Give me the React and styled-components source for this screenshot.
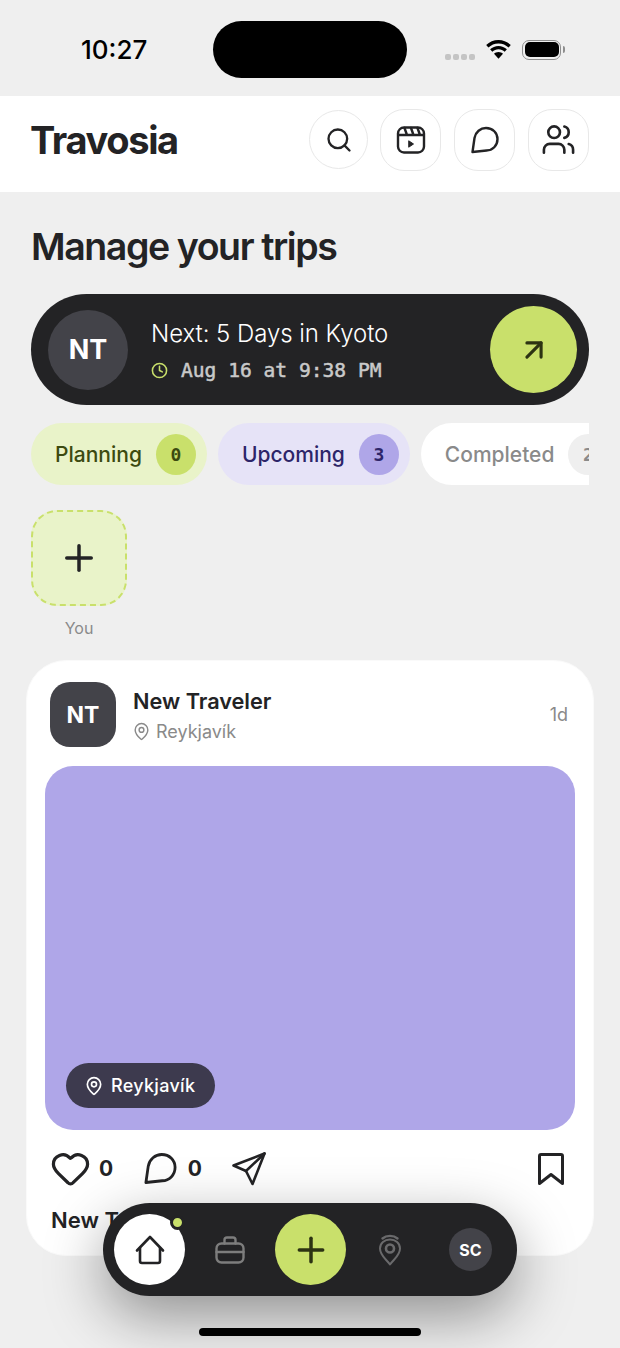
import styled, { createGlobalStyle } from "styled-components";
import { ArrowUpRight, Clock, MapPin, Plus, Search, Users, Heart } from "lucide-react";

const GlobalStyle = createGlobalStyle`
  html, body {
    margin: 0;
    padding: 0;
    background: #efefef;
  }
  body {
    font-family: Inter, "Noto Sans", sans-serif;
    color: #232325;
    overflow: hidden;
  }
  * {
    box-sizing: border-box;
  }
`;

const ChatIcon = ({ size = 30 }) => (
  <svg width={size} height={size} viewBox="0 0 30 30" fill="none" stroke="currentColor" strokeWidth="2.4" strokeLinejoin="round">
    <path d="M2.5 27 L4.5 13 C5.5 7 10.5 3 16 3 C22.8 3 27.5 8 27.5 14 C27.5 20.8 22.5 25.3 16.5 25.5 Z" />
  </svg>
);

const ReelsIcon = () => (
  <svg width="30" height="30" viewBox="0 0 30 30" fill="none" stroke="currentColor" strokeWidth="2.4" strokeLinejoin="round" strokeLinecap="round">
    <rect x="2" y="2.5" width="26" height="25" rx="6" />
    <path d="M2.5 10h25M8.5 3l2.5 7M15 3l2.5 7M21.5 3l2.5 7" />
    <path d="M13 16l4.5 3-4.5 3z" fill="currentColor" strokeWidth="1" />
  </svg>
);

const PlaneIcon = () => (
  <svg width="36" height="36" viewBox="0 0 36 36" fill="none" stroke="currentColor" strokeWidth="2.6" strokeLinejoin="round" strokeLinecap="round">
    <path d="M33.5 2.5 L2.5 14.5 L15 20 L21.5 33 Z" />
    <path d="M33.5 2.5 L15 20" />
  </svg>
);

const BookmarkIcon = () => (
  <svg width="28" height="34" viewBox="0 0 28 34" fill="none" stroke="currentColor" strokeWidth="3" strokeLinejoin="round" strokeLinecap="round">
    <path d="M2.5 4 C2.5 3 3.1 2.4 4.1 2.4 H23.9 C24.9 2.4 25.5 3 25.5 4 V31.5 L14 22.5 L2.5 31.5 Z" />
  </svg>
);

const HouseIcon = () => (
  <svg width="30" height="30" viewBox="0 0 30 30" fill="none" stroke="currentColor" strokeWidth="2.6" strokeLinejoin="round" strokeLinecap="round">
    <path d="M2 15.5 L15 2 L28 15.5" />
    <path d="M5 13 V26 C5 27.2 5.8 28 7 28 H23 C24.2 28 25 27.2 25 26 V13" />
  </svg>
);

const CaseIcon = () => (
  <svg width="30" height="28" viewBox="0 0 30 28" fill="none" stroke="currentColor" strokeWidth="2.4" strokeLinejoin="round" strokeLinecap="round">
    <rect x="1.5" y="7.5" width="27" height="19" rx="5" />
    <path d="M9.5 7.5 V4 C9.5 2.6 10.4 1.5 12 1.5 H18 C19.6 1.5 20.5 2.6 20.5 4 V7.5" />
    <path d="M1.5 16 H28.5" />
  </svg>
);

const SignalPinIcon = () => (
  <svg width="24" height="32" viewBox="0 0 24 32" fill="none" stroke="currentColor" strokeLinecap="round" strokeLinejoin="round">
    <path d="M12 30.5 C8 25 2 21.5 2 14.5 C2 9 6.5 5.5 12 5.5 C17.5 5.5 22 9 22 14.5 C22 21.5 16 25 12 30.5 Z" strokeWidth="2" />
    <circle cx="12" cy="14.5" r="4" strokeWidth="2.6" />
    <path d="M4.5 4.5 C8.5 1 15.5 1 19.5 4.5" strokeWidth="2.4" />
  </svg>
);

const WifiIcon = () => (
  <svg width="27" height="20" viewBox="0 0 27 20" fill="currentColor">
    <path d="M13.5 3.4c3.9 0 7.5 1.6 10.1 4.1l2.2-2.4C22.6 2 18.3.1 13.5.1S4.4 2 1.2 5.1l2.2 2.4c2.6-2.5 6.2-4.1 10.1-4.1z" />
    <path d="M13.5 9.2c2.4 0 4.6.9 6.2 2.5l2.2-2.4c-2.2-2.1-5.2-3.4-8.4-3.4s-6.2 1.3-8.4 3.4l2.2 2.4c1.6-1.6 3.8-2.5 6.2-2.5z" />
    <path d="M13.5 11.9c-1.8 0-3.4.7-4.5 1.8l4.5 5.1 4.5-5.1c-1.1-1.1-2.7-1.8-4.5-1.8z" />
  </svg>
);

const Page = styled.div`
  width: 620px;
  height: 1348px;
  position: relative;
  overflow: hidden;
  background: #efefef;
`;

const StatusBar = styled.div`
  height: 96px;
  padding: 21px 53px 0 81px;
  display: flex;
  align-items: flex-start;
`;

const Time = styled.div`
  width: 132px;
  height: 57px;
  display: flex;
  align-items: center;
  font-size: 26px;
  font-weight: 500;
  color: #000;
`;

const Island = styled.div`
  width: 194px;
  height: 57px;
  border-radius: 29px;
  background: #000;
`;

const StatusIcons = styled.div`
  height: 57px;
  margin-left: 38px;
  display: flex;
  align-items: center;
  color: #000;
`;

const SignalDots = styled.div`
  display: flex;
  gap: 2px;
  margin: 14px 10px 0 0;
`;

const SignalDot = styled.span`
  width: 6px;
  height: 6px;
  border-radius: 2px;
  background: #c4c4c4;
`;

const Battery = styled.div`
  width: 39px;
  height: 20px;
  margin-left: 10px;
  border: 1.5px solid #8e8e8e;
  border-radius: 7px;
  padding: 1.5px;
  position: relative;
  &::before {
    content: "";
    display: block;
    height: 100%;
    border-radius: 5px;
    background: #000;
  }
  &::after {
    content: "";
    position: absolute;
    right: -5px;
    top: 5px;
    width: 2px;
    height: 7px;
    border-radius: 0 2px 2px 0;
    background: #8e8e8e;
  }
`;

const Header = styled.header`
  height: 96px;
  background: #fff;
  padding: 0 31px 9px;
  display: flex;
  align-items: center;
  justify-content: space-between;
`;

const Brand = styled.h1`
  margin: 0 0 0 -1px;
  font-size: 38px;
  font-weight: 650;
  letter-spacing: -1.35px;
  color: #232325;
`;

const HeaderActions = styled.div`
  display: flex;
  align-items: center;
  gap: 13px;
`;

const IconButton = styled.button`
  width: ${({ $narrow }) => ($narrow ? 59 : 61)}px;
  height: ${({ $narrow }) => ($narrow ? 59 : 62)}px;
  margin-right: ${({ $narrow }) => ($narrow ? -1 : 0)}px;
  padding: 0;
  border-radius: ${({ $narrow }) => ($narrow ? "50%" : "24px")};
  border: 1.5px solid #e8e8e8;
  background: #fff;
  color: #232325;
  display: flex;
  align-items: center;
  justify-content: center;
`;

const Main = styled.main`
  padding: 0 31px;
`;

const PageTitle = styled.h2`
  margin: 30px 0 22px;
  height: 50px;
  line-height: 50px;
  font-size: 37.5px;
  font-weight: 600;
  letter-spacing: -1.42px;
  color: #232325;
`;

const NextCard = styled.div`
  height: 111px;
  border-radius: 56px;
  background: #232325;
  padding: 0 12px 0 17px;
  display: flex;
  align-items: center;
`;

const NextAvatar = styled.div`
  width: 80px;
  height: 80px;
  border-radius: 50%;
  background: #434349;
  color: #fff;
  font-size: 27px;
  font-weight: 700;
  display: flex;
  align-items: center;
  justify-content: center;
  flex: none;
`;

const NextText = styled.div`
  flex: 1;
  margin-left: 23px;
  padding-top: 2px;
  display: flex;
  flex-direction: column;
  gap: 8px;
`;

const NextTitle = styled.div`
  font-size: 24px;
  font-weight: 300;
  letter-spacing: -0.05px;
  color: #fff;
  line-height: 32px;
`;

const NextWhen = styled.div`
  display: flex;
  align-items: center;
  gap: 13px;
  font-family: "DejaVu Sans Mono", monospace;
  font-size: 19.6px;
  line-height: 26px;
  color: #c9c9c9;
  -webkit-text-stroke: 0.5px #c9c9c9;
  svg {
    color: #c9e06b;
  }
`;

const GoButton = styled.button`
  width: 87px;
  height: 87px;
  padding: 0;
  border: none;
  border-radius: 50%;
  background: #c9e06b;
  color: #2c3312;
  display: flex;
  align-items: center;
  justify-content: center;
`;

const Tabs = styled.div`
  margin-top: 18px;
  display: flex;
  gap: 11px;
  overflow: hidden;
`;

const tabColors = {
  green: { bg: "#e9f3c9", fg: "#3c4a10", badge: "#c9e06b" },
  purple: { bg: "#e6e3f7", fg: "#2d2569", badge: "#afa6e8" },
  plain: { bg: "#fff", fg: "#8a8a8a", badge: "#efefef" },
};

const Tab = styled.div`
  height: 62px;
  flex: none;
  border-radius: 31px;
  padding: 0 11px 0 24px;
  display: flex;
  align-items: center;
  gap: 14px;
  font-size: 21px;
  font-weight: 500;
  background: ${({ $tone }) => tabColors[$tone].bg};
  color: ${({ $tone }) => tabColors[$tone].fg};
`;

const TabCount = styled.span`
  width: 40px;
  height: 41px;
  border-radius: 50%;
  display: flex;
  align-items: center;
  justify-content: center;
  font-family: "DejaVu Sans Mono", monospace;
  font-size: 18px;
  font-weight: 700;
  background: ${({ $tone }) => tabColors[$tone].badge};
`;

const Stories = styled.div`
  margin-top: 25px;
  width: 96px;
  display: flex;
  flex-direction: column;
  align-items: center;
  gap: 12px;
`;

const AddStory = styled.div`
  width: 96px;
  height: 96px;
  border-radius: 26px;
  border: 2px dashed #c9e06b;
  background: #e9f3c9;
  color: #232325;
  display: flex;
  align-items: center;
  justify-content: center;
`;

const StoryLabel = styled.span`
  font-size: 16px;
  line-height: 20px;
  color: #8a8a8a;
`;

const PostCard = styled.article`
  margin: 22px -5px 0;
  height: 596px;
  border-radius: 40px;
  background: #fff;
  border: 1px solid #fafafa;
  padding: 21px 18px 0 18px;
`;

const PostHeader = styled.div`
  display: flex;
  align-items: center;
  padding: 0 7px 0 5px;
`;

const PostAvatar = styled.div`
  width: 66px;
  height: 65px;
  border-radius: 20px;
  background: #434349;
  color: #fff;
  font-size: 23px;
  font-weight: 700;
  display: flex;
  align-items: center;
  justify-content: center;
  flex: none;
`;

const PostMeta = styled.div`
  flex: 1;
  margin-left: 17px;
  padding-top: 2px;
  display: flex;
  flex-direction: column;
  gap: 4px;
`;

const PostAuthor = styled.div`
  font-size: 21.7px;
  font-weight: 600;
  line-height: 28px;
  color: #232325;
`;

const PostPlace = styled.div`
  display: flex;
  align-items: center;
  gap: 5px;
  margin-left: -1px;
  font-size: 18px;
  line-height: 26px;
  color: #8a8a8a;
`;

const PostAge = styled.span`
  font-size: 18px;
  color: #8a8a8a;
`;

const PostImage = styled.div`
  margin-top: 19px;
  height: 364px;
  border-radius: 28px;
  background: #afa6e8;
  display: flex;
  align-items: flex-end;
  padding: 0 0 22px 21px;
`;

const PlaceChip = styled.div`
  height: 45px;
  padding: 0 20px 0 18px;
  border-radius: 23px;
  background: #3d3a4e;
  color: #fff;
  font-size: 18px;
  font-weight: 500;
  letter-spacing: 0.3px;
  display: flex;
  align-items: center;
  gap: 7px;
`;

const PostActions = styled.div`
  margin-top: 18px;
  padding: 0 10px 0 5px;
  display: flex;
  align-items: center;
  color: #232325;
`;

const ActionCount = styled.span`
  font-size: 21px;
  font-weight: 700;
  margin: 0 29.5px 0 ${({ $gap }) => $gap}px;
`;

const Spacer = styled.div`
  flex: 1;
`;

const Caption = styled.div`
  margin: 17px 0 0 6px;
  font-size: 22px;
  font-weight: 600;
  line-height: 28px;
  color: #232325;
`;

const TabBar = styled.nav`
  position: absolute;
  left: 103px;
  top: 1203px;
  width: 414px;
  height: 93px;
  border-radius: 47px;
  background: #232325;
  box-shadow: 0 20px 60px rgba(0, 0, 0, 0.4);
  padding: 0 25px 0 11px;
  display: flex;
  align-items: center;
`;

const NavCircle = styled.div`
  width: 71px;
  height: 71px;
  flex: none;
  border-radius: 50%;
  background: ${({ $accent }) => ($accent ? "#c9e06b" : "#fff")};
  color: ${({ $accent }) => ($accent ? "#2c3312" : "#232325")};
  display: flex;
  align-items: center;
  justify-content: center;
  position: relative;
`;

const NavDot = styled.span`
  position: absolute;
  top: 1px;
  right: 0;
  width: 15px;
  height: 15px;
  border-radius: 50%;
  background: #c9e06b;
  border: 3px solid #232325;
`;

const NavItem = styled.div`
  width: ${({ $slot }) => $slot}px;
  flex: none;
  color: ${({ $dim }) => ($dim ? "#6a6a6c" : "#7d7d7d")};
  display: flex;
  align-items: center;
  justify-content: center;
`;

const NavAvatar = styled.div`
  width: 43px;
  height: 43px;
  margin-left: auto;
  border-radius: 50%;
  background: #434349;
  color: #fff;
  font-size: 16px;
  font-weight: 700;
  display: flex;
  align-items: center;
  justify-content: center;
`;

const HomeIndicator = styled.div`
  position: absolute;
  left: 199px;
  top: 1328px;
  width: 222px;
  height: 8px;
  border-radius: 4px;
  background: #000;
`;

const App = () => {
  return (
    <Page>
      <GlobalStyle />
      <StatusBar>
        <Time>10:27</Time>
        <Island />
        <StatusIcons>
          <SignalDots>
            <SignalDot />
            <SignalDot />
            <SignalDot />
            <SignalDot />
          </SignalDots>
          <WifiIcon />
          <Battery />
        </StatusIcons>
      </StatusBar>

      <Header>
        <Brand>Travosia</Brand>
        <HeaderActions>
          <IconButton $narrow>
            <Search size={28} strokeWidth={2} />
          </IconButton>
          <IconButton>
            <ReelsIcon />
          </IconButton>
          <IconButton>
            <ChatIcon />
          </IconButton>
          <IconButton>
            <Users size={35} strokeWidth={1.8} />
          </IconButton>
        </HeaderActions>
      </Header>

      <Main>
        <PageTitle>Manage your trips</PageTitle>

        <NextCard>
          <NextAvatar>NT</NextAvatar>
          <NextText>
            <NextTitle>Next: 5 Days in Kyoto</NextTitle>
            <NextWhen>
              <Clock size={17} strokeWidth={2.2} />
              Aug 16 at 9:38 PM
            </NextWhen>
          </NextText>
          <GoButton>
            <ArrowUpRight size={34} strokeWidth={2.2} />
          </GoButton>
        </NextCard>

        <Tabs>
          <Tab $tone="green">
            Planning
            <TabCount $tone="green">0</TabCount>
          </Tab>
          <Tab $tone="purple">
            Upcoming
            <TabCount $tone="purple">3</TabCount>
          </Tab>
          <Tab $tone="plain">
            Completed
            <TabCount $tone="plain">2</TabCount>
          </Tab>
        </Tabs>

        <Stories>
          <AddStory>
            <Plus size={42} strokeWidth={2} />
          </AddStory>
          <StoryLabel>You</StoryLabel>
        </Stories>

        <PostCard>
          <PostHeader>
            <PostAvatar>NT</PostAvatar>
            <PostMeta>
              <PostAuthor>New Traveler</PostAuthor>
              <PostPlace>
                <MapPin size={19} strokeWidth={1.8} />
                Reykjavík
              </PostPlace>
            </PostMeta>
            <PostAge>1d</PostAge>
          </PostHeader>

          <PostImage>
            <PlaceChip>
              <MapPin size={20} strokeWidth={2} />
              Reykjavík
            </PlaceChip>
          </PostImage>

          <PostActions>
            <Heart size={41} strokeWidth={1.9} />
            <ActionCount $gap={8}>0</ActionCount>
            <ChatIcon size={35} />
            <ActionCount $gap={10}>0</ActionCount>
            <PlaneIcon />
            <Spacer />
            <BookmarkIcon />
          </PostActions>

          <Caption>New Traveler</Caption>
        </PostCard>
      </Main>

      <TabBar>
        <NavCircle>
          <HouseIcon />
          <NavDot />
        </NavCircle>
        <NavItem $slot={90}>
          <CaseIcon />
        </NavItem>
        <NavCircle $accent>
          <Plus size={40} strokeWidth={2.1} />
        </NavCircle>
        <NavItem $slot={88} $dim>
          <SignalPinIcon />
        </NavItem>
        <NavAvatar>SC</NavAvatar>
      </TabBar>

      <HomeIndicator />
    </Page>
  );
};

export default App;
